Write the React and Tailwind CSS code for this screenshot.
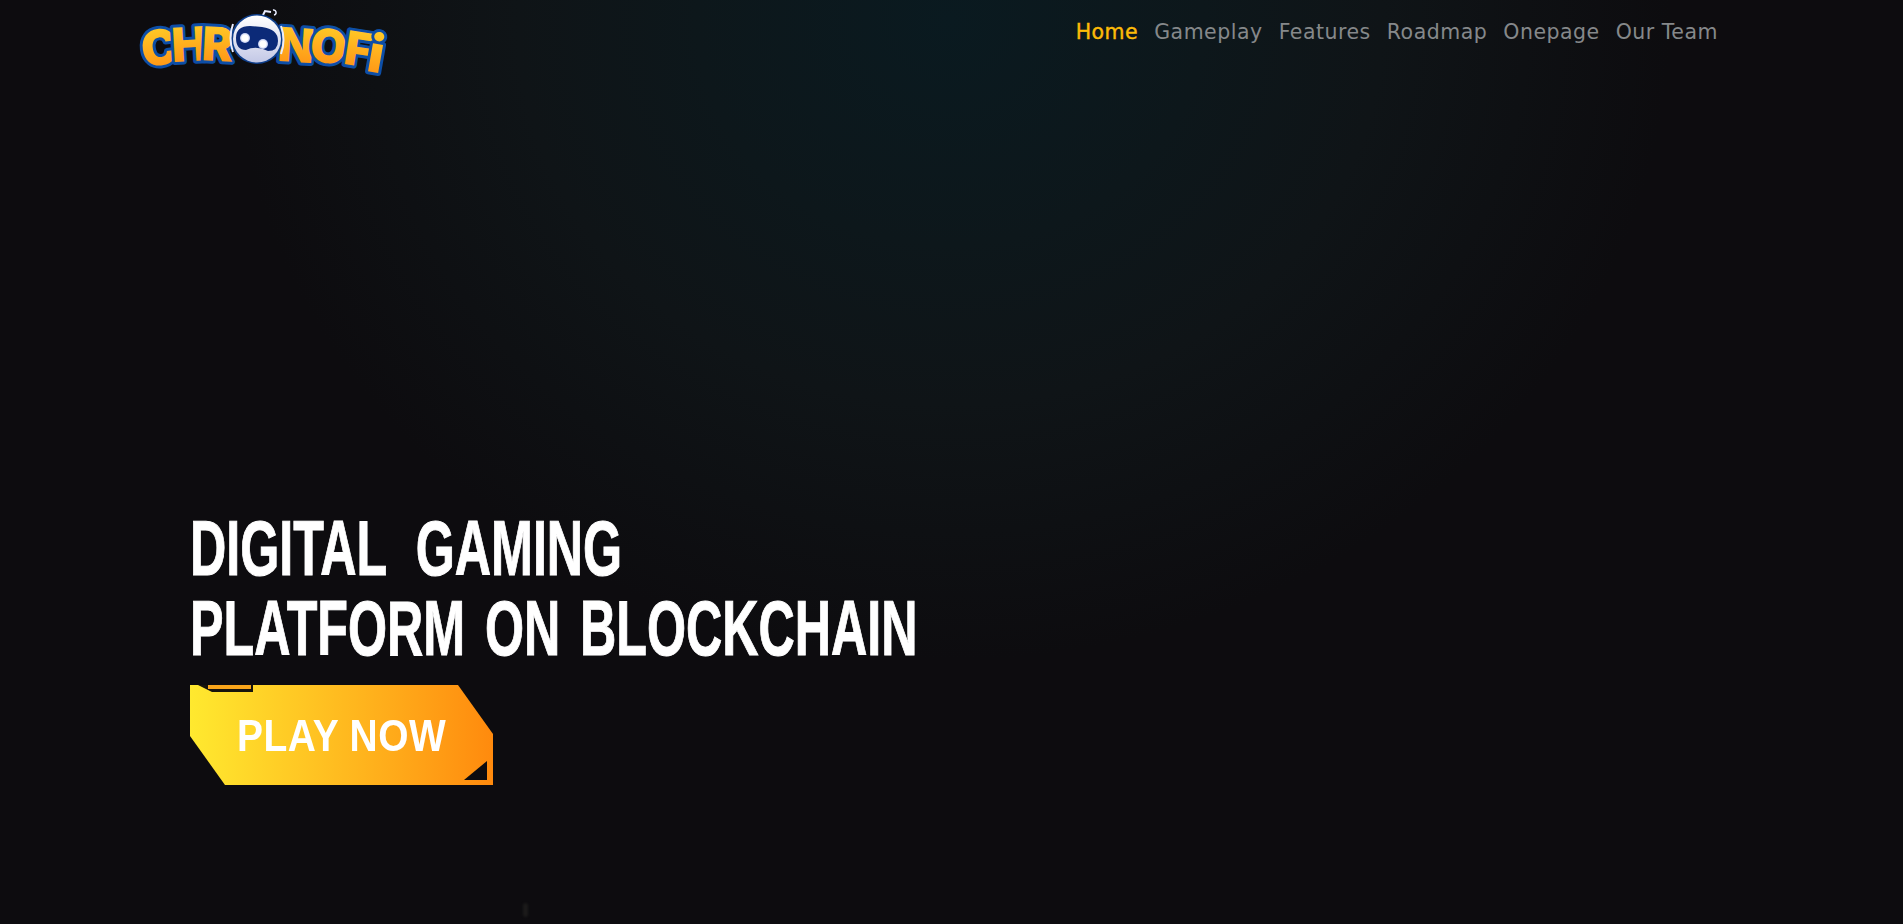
const navItems = [
  { label: "Home", active: true },
  { label: "Gameplay" },
  { label: "Features" },
  { label: "Roadmap" },
  { label: "Onepage" },
  { label: "Our Team" },
];

const logoLetters = [
  { c: "C", x: 24, y: 57, s: 49, r: -8 },
  { c: "H", x: 52, y: 53, s: 47, r: -3 },
  { c: "R", x: 79, y: 53, s: 47, r: 3 },
  { c: "N", x: 157, y: 54, s: 47, r: 4 },
  { c: "O", x: 189, y: 55, s: 47, r: 6 },
  { c: "F", x: 218, y: 58, s: 47, r: 9 },
  { c: "i", x: 235, y: 64, s: 52, r: 10 },
];

function Logo() {
  return (
    <svg width="250" height="76" viewBox="0 0 250 76" className="block overflow-visible" aria-label="ChronoFi">
      <defs>
        <linearGradient id="lg" x1="0" y1="0" x2="0" y2="1">
          <stop offset="0" stopColor="#ffd52a" />
          <stop offset="1" stopColor="#ff8a12" />
        </linearGradient>
        <linearGradient id="hd" x1="0" y1="0" x2="0" y2="1">
          <stop offset="0" stopColor="#ffffff" />
          <stop offset="1" stopColor="#c3c8e6" />
        </linearGradient>
        <radialGradient id="eye">
          <stop offset="0.6" stopColor="#ffffff" />
          <stop offset="1" stopColor="#b8c4f0" />
        </radialGradient>
      </defs>
      {logoLetters.map((l) => (
        <text
          key={l.c}
          x={l.x}
          y={l.y}
          fontSize={l.s}
          textAnchor="middle"
          transform={`rotate(${l.r} ${l.x} ${l.y})`}
          fill="url(#lg)"
          stroke="#0d4ea6"
          strokeWidth="6"
          strokeLinejoin="round"
          style={{ paintOrder: "stroke", fontFamily: '"Inter", sans-serif', fontWeight: 900 }}
        >
          {l.c}
        </text>
      ))}
      <path d="M124 9 L127 3 L133 4" fill="none" stroke="#e8ecff" strokeWidth="2" />
      <path d="M135 2 a2.5 2.5 0 1 1 1 5" fill="none" stroke="#e8ecff" strokeWidth="1.5" />
      <ellipse cx="119" cy="31" rx="26" ry="25" fill="#0f3f8c" />
      <ellipse cx="119" cy="31" rx="24" ry="23.5" fill="url(#hd)" />
      <path d="M95 16 Q90 30 95 44" fill="none" stroke="#e8ecff" strokeWidth="2" />
      <path d="M143 18 Q148 32 143 46" fill="none" stroke="#e8ecff" strokeWidth="2" />
      <path d="M98 30 Q98 18 112 18 L124 19 Q140 21 140 33 Q140 43 130 43 Q118 37 108 42 Q98 42 98 30 Z" fill="#0c2a78" />
      <circle cx="107" cy="30" r="5" fill="url(#eye)" />
      <circle cx="125" cy="36" r="5" fill="url(#eye)" />
    </svg>
  );
}

export default function App() {
  return (
    <div className="relative h-[924px] overflow-hidden bg-[#0d0c0f] bg-[radial-gradient(ellipse_720px_640px_at_950px_20px,#0a1a20_0%,#0d171b_35%,#0f1417_60%,#0d0c0f_100%)] [font-family:'Inter',sans-serif]">
      <header className="ml-[138px] mr-[185px] flex items-start justify-between pt-[8px]">
        <Logo />
        <nav className="flex gap-4 pt-[10px] text-[20.5px] leading-[28px] tracking-[0.5px] [font-family:'DejaVu_Sans',sans-serif]">
          {navItems.map((n) => (
            <a key={n.label} className={n.active ? "text-[#fdbb08] [-webkit-text-stroke:0.4px_#fdbb08]" : "text-[#85888a]"}>
              {n.label}
            </a>
          ))}
        </nav>
      </header>

      <main className="ml-[190px] mt-[424px]">
        <h1 className="origin-left scale-x-[0.652] whitespace-nowrap text-[77px] font-bold leading-[80px] text-white [word-spacing:9px] [-webkit-text-stroke:1px_white] [font-family:'Liberation_Sans',sans-serif]">
          <span className="[word-spacing:24px]">DIGITAL GAMING</span>
          <br />
          PLATFORM ON BLOCKCHAIN
        </h1>
        <a className="relative mt-[17px] flex h-[100px] w-[303px] items-center bg-gradient-to-r from-[#ffe92f] to-[#ff8a0d] pl-[47px] [clip-path:polygon(0_0,268px_0,100%_49px,100%_100%,35px_100%,0_51px)]">
          <span className="origin-left scale-x-[0.885] pt-[2px] text-[44px] font-bold tracking-[0.5px] whitespace-nowrap text-white [font-family:'Liberation_Sans',sans-serif]">PLAY NOW</span>
          <span className="absolute left-[8px] top-0 h-[7px] w-[55px] bg-[#17140c] [clip-path:polygon(0_0,100%_0,100%_100%,14px_100%)]" />
          <span className="absolute left-[18px] top-0 h-[4px] w-[43px] bg-[#f9a51a]" />
          <span className="absolute right-[6px] bottom-[5px] h-[19px] w-[23px] bg-[#0d0c0f] [clip-path:polygon(100%_0,100%_100%,0_100%)]" />
        </a>
      </main>
      <span className="absolute left-[523px] top-[903px] h-[14px] w-[5px] rounded-full bg-[#1b1a1a] blur-[1px]" />
    </div>
  );
}
